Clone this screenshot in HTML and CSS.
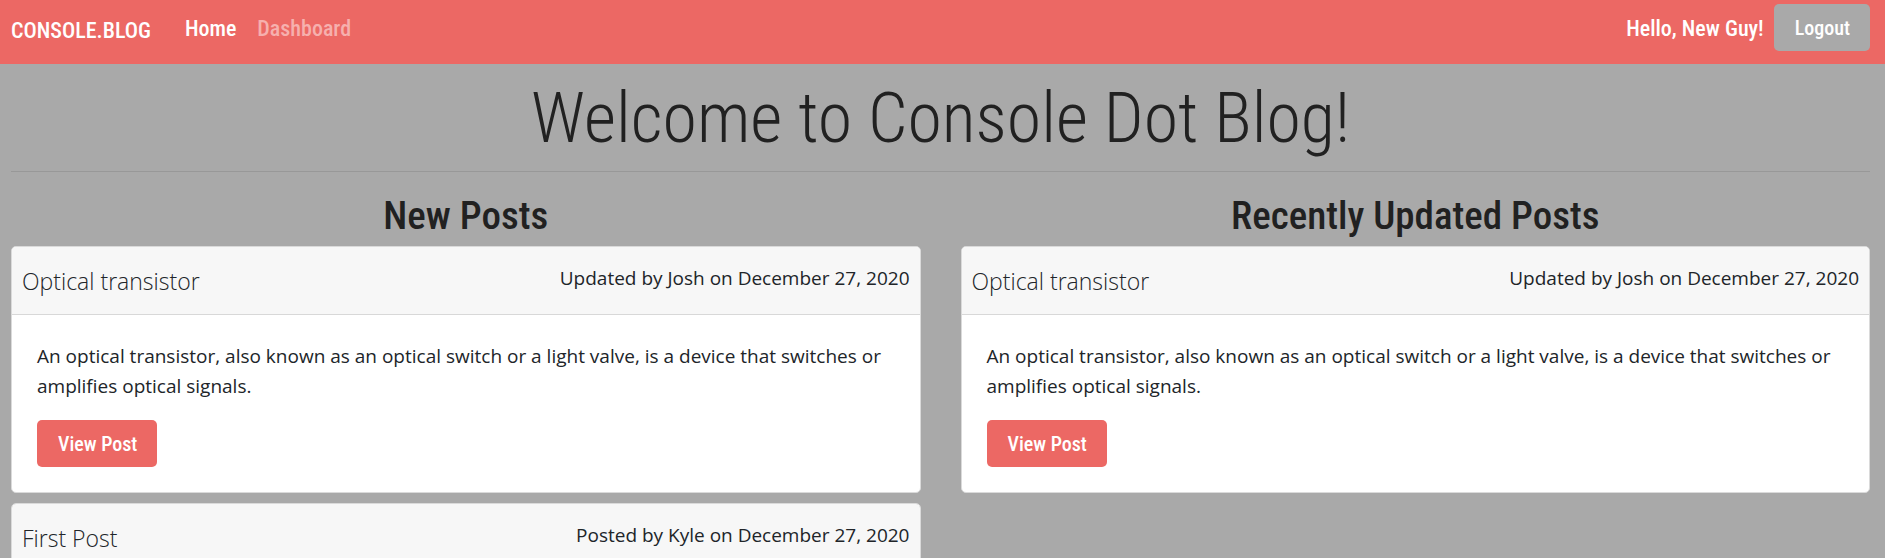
FILE: index.html
```html
<!DOCTYPE html>
<html lang="en">
<head>
<meta charset="utf-8">
<meta name="viewport" content="width=device-width, initial-scale=1">
<title>Console Dot Blog</title>
<link rel="stylesheet" href="styles.css">
</head>
<body>
<header class="navbar">
  <a class="brand" href="#">CONSOLE.BLOG</a>
  <nav class="nav-links">
    <a class="nav-link active" href="#">Home</a>
    <a class="nav-link" href="#">Dashboard</a>
  </nav>
  <span class="greeting">Hello, New Guy!</span>
  <button class="btn btn-secondary" type="button">Logout</button>
</header>
<main class="page">
  <h1 class="title">Welcome to Console Dot Blog!</h1>
  <hr class="divider">
  <div class="columns">
    <section class="column">
      <h2 class="column-title">New Posts</h2>
      <article class="card">
        <div class="card-header">
          <h3 class="card-title">Optical transistor</h3>
          <p class="card-meta">Updated by Josh on December 27, 2020</p>
        </div>
        <div class="card-body">
          <p class="card-text">An optical transistor, also known as an optical switch or a light valve, is a device that switches or amplifies optical signals.</p>
          <button class="btn btn-primary" type="button">View Post</button>
        </div>
      </article>
      <article class="card">
        <div class="card-header">
          <h3 class="card-title">First Post</h3>
          <p class="card-meta">Posted by Kyle on December 27, 2020</p>
        </div>
      </article>
    </section>
    <section class="column">
      <h2 class="column-title">Recently Updated Posts</h2>
      <article class="card">
        <div class="card-header">
          <h3 class="card-title">Optical transistor</h3>
          <p class="card-meta">Updated by Josh on December 27, 2020</p>
        </div>
        <div class="card-body">
          <p class="card-text">An optical transistor, also known as an optical switch or a light valve, is a device that switches or amplifies optical signals.</p>
          <button class="btn btn-primary" type="button">View Post</button>
        </div>
      </article>
    </section>
  </div>
</main>
</body>
</html>
```
FILE: styles.css
```css
* { box-sizing: border-box; }

html { overflow-x: hidden; }

body {
  margin: 0;
  background: #a9a9a9;
  color: #212529;
  font-family: "Open Sans", sans-serif;
  font-size: 19px;
  line-height: 30px;
}

h1, h2, h3, p { margin: 0; }

.navbar {
  display: flex;
  align-items: flex-start;
  padding: 4px 15px 13px 11px;
  background: #ec6864;
  color: #fff;
  font-family: "Roboto Condensed", "Open Sans Condensed", sans-serif;
  font-size: 22px;
  font-weight: 500;
}

.navbar a { text-decoration: none; }

.brand {
  padding-top: 12px;
  margin-right: 34px;
  color: #fff;
}

.nav-links {
  display: flex;
  gap: 21px;
  padding-top: 10px;
}

.nav-link { color: #f6b0ae; }
.nav-link.active { color: #fff; }

.greeting {
  margin-left: auto;
  padding: 10px 10px 0 0;
}

.btn {
  padding: 9px 20px 8px 21px;
  border: 0;
  border-radius: 5px;
  color: #fff;
  font: 500 20px/30px "Roboto Condensed", "Open Sans Condensed", sans-serif;
}

.btn-primary { background: #ec6864; }
.btn-secondary { background: #a9a9a9; }

.page { padding: 10px 15px 0 11px; }

.title {
  color: #212121;
  font: 300 70px/88px "Roboto Condensed", "Open Sans Condensed", sans-serif;
  text-align: center;
}

.divider {
  margin: 9px 0 20px;
  border: 0;
  border-top: 1px solid #989898;
}

.columns {
  display: grid;
  grid-template-columns: 1fr 1fr;
  gap: 40px;
}

.column-title {
  margin-bottom: 6px;
  color: #212121;
  font: 500 39px/48px "Roboto Condensed", "Open Sans Condensed", sans-serif;
  text-align: center;
}

.card {
  margin-bottom: 10px;
  overflow: hidden;
  border: 1px solid #dadada;
  border-radius: 5px;
  background: #fff;
}

.card-header {
  display: flex;
  justify-content: space-between;
  padding: 16px 10px 15px;
  border-bottom: 1px solid #d8d8d8;
  background: #f7f7f7;
}

.card-title {
  font-size: 23px;
  font-weight: 300;
  line-height: 36px;
}

.card-body { padding: 26px 25px 25px; }

.card-text { margin-bottom: 19px; }
```
